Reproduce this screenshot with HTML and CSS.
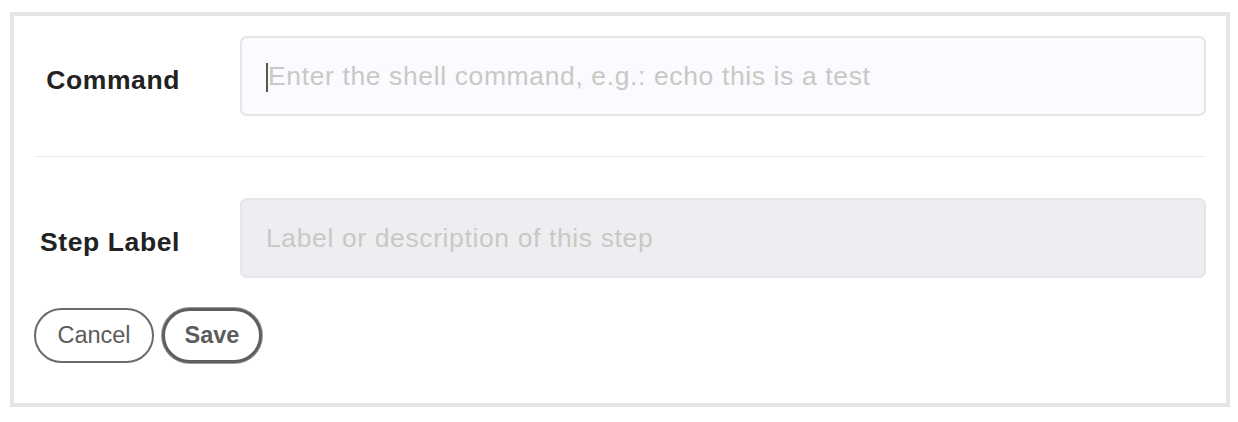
FILE: index.html
```html
<!DOCTYPE html>
<html lang="en">
<head>
<meta charset="utf-8">
<title>Step editor</title>
<link rel="stylesheet" href="styles.css">
</head>
<body>
<form class="panel">
  <div class="row">
    <label class="label" for="cmd">Command</label>
    <div class="field">
      <input id="cmd" class="input input-active" type="text" placeholder="Enter the shell command, e.g.: echo this is a test">
      <span class="caret"></span>
    </div>
  </div>
  <hr class="divider">
  <div class="row">
    <label class="label" for="lbl">Step Label</label>
    <div class="field">
      <input id="lbl" class="input input-muted" type="text" placeholder="Label or description of this step">
    </div>
  </div>
  <div class="actions">
    <button type="button" class="btn btn-cancel">Cancel</button>
    <button type="button" class="btn btn-save">Save</button>
  </div>
</form>
</body>
</html>
```

FILE: styles.css
```css
* { box-sizing: border-box; }
html, body { margin: 0; padding: 0; background: #ffffff; }
body {
  font-family: "Liberation Sans", Arial, Helvetica, sans-serif;
  padding: 12px 8px 0 10px;
}
.panel {
  width: 1220px;
  height: 395px;
  border: 4px solid #e6e6e6;
  padding: 20px 20px 0 20px;
  display: flex;
  flex-direction: column;
}
.row {
  display: grid;
  grid-template-columns: 145px 1fr;
  column-gap: 61px;
  align-items: center;
}
.label {
  text-align: right;
  font-weight: bold;
  font-size: 26.5px;
  letter-spacing: 0.6px;
  color: #222222;
  padding-top: 9px;
  margin-right: -1px;
}
.field { position: relative; }
.input {
  display: block;
  width: 100%;
  height: 80px;
  border: 2px solid #e5e5ea;
  border-radius: 7px;
  padding: 0 0 0 26px;
  font-family: "Liberation Sans", Arial, Helvetica, sans-serif;
  font-size: 26.5px;
  letter-spacing: 0.62px;
  color: #333;
  outline: none;
}
.input::placeholder { color: #c9c9c4; opacity: 1; }
.input-active { background: #fafaff; }
.input-muted { background: #eeeef2; padding-left: 24px; }
.caret {
  position: absolute;
  left: 26px;
  top: 27px;
  width: 2px;
  height: 29px;
  background: #555555;
}
.divider {
  border: 0;
  height: 1px;
  background: #ebebeb;
  margin: 40px 0 41px 0;
}
.actions {
  display: flex;
  gap: 8px;
  margin-top: 30px;
}
.btn {
  height: 55px;
  border-radius: 28px;
  background: #ffffff;
  font-family: "Liberation Sans", Arial, Helvetica, sans-serif;
  font-size: 23.5px;
  color: #5c5c5c;
  padding: 0;
  cursor: pointer;
}
.btn-cancel {
  width: 120px;
  border: 2px solid #6a6a6a;
}
.btn-save {
  width: 100px;
  border: 3px solid #5e5e5e;
  box-shadow: 0 0 0 1px #9a9a9a;
  font-weight: bold;
}
```
